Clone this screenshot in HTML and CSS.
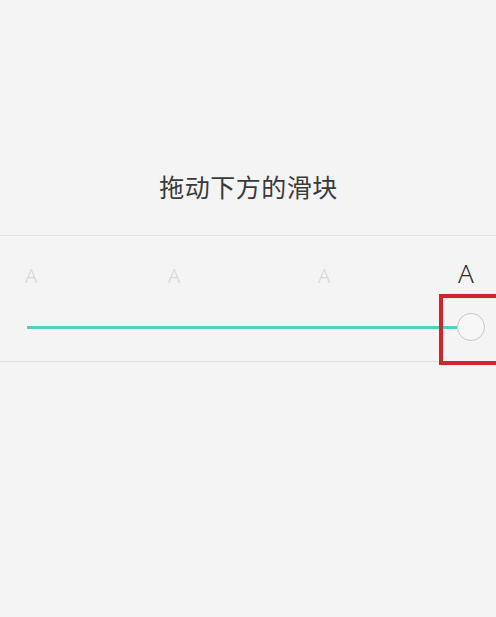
FILE: index.html
```html
<!DOCTYPE html>
<html lang="zh-CN">
<head>
<meta charset="utf-8">
<link rel="stylesheet" href="styles.css">
</head>
<body>
<div class="page">
  <h1 class="title">拖动下方的滑块</h1>
  <section class="panel">
    <div class="labels">
      <span class="lbl">A</span>
      <span class="lbl">A</span>
      <span class="lbl">A</span>
      <span class="lbl lbl-active">A</span>
    </div>
    <div class="slider">
      <div class="track"></div>
      <div class="knob"></div>
    </div>
    <div class="highlight"></div>
  </section>
</div>
</body>
</html>
```
FILE: styles.css
```css
html, body {
  margin: 0;
  padding: 0;
  background: #f4f4f4;
  overflow: hidden;
}
.page {
  width: 496px;
  height: 617px;
  font-family: "Noto Sans CJK SC", "Noto Sans", sans-serif;
}
.title {
  margin: 0;
  padding: 170px 0 0 1px;
  height: 65px;
  font-size: 25px;
  line-height: 32px;
  font-weight: 400;
  color: #3a3a3a;
  text-align: center;
  letter-spacing: 0.5px;
  border-bottom: 1px solid #e2e2e2;
}
.panel {
  position: relative;
  height: 125px;
  border-bottom: 1px solid #e2e2e2;
}
.labels {
  display: grid;
  grid-template-columns: 143px 150px 140px auto;
  align-items: baseline;
  padding: 25px 0 0 25px;
  height: 24px;
  font-family: "Noto Sans", sans-serif;
  font-weight: 300;
}
.lbl {
  font-size: 20px;
  line-height: 24px;
  color: #d8d8d8;
}
.lbl-active {
  font-size: 26px;
  color: #2e2e2e;
}
.slider {
  display: flex;
  align-items: center;
  padding: 0 11px 0 27px;
  margin-top: 27px;
  height: 30px;
}
.track {
  flex: 1;
  height: 3px;
  background: #4fd0c0;
}
.knob {
  width: 26px;
  height: 26px;
  border: 1px solid #c8c8c8;
  border-radius: 50%;
  background: #f7f7f7;
}
.highlight {
  position: absolute;
  left: 439px;
  top: 58px;
  right: -10px;
  height: 63px;
  border: 4px solid #d3242c;
}
```
